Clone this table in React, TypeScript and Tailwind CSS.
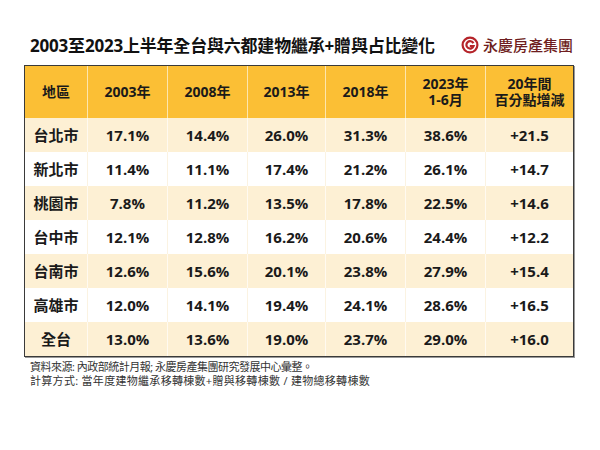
const font = { fontFamily: '"Open Sans", "Noto Sans CJK TC", sans-serif' };

const rows = [
  ["台北市", "17.1%", "14.4%", "26.0%", "31.3%", "38.6%", "+21.5"],
  ["新北市", "11.4%", "11.1%", "17.4%", "21.2%", "26.1%", "+14.7"],
  ["桃園市", "7.8%", "11.2%", "13.5%", "17.8%", "22.5%", "+14.6"],
  ["台中市", "12.1%", "12.8%", "16.2%", "20.6%", "24.4%", "+12.2"],
  ["台南市", "12.6%", "15.6%", "20.1%", "23.8%", "27.9%", "+15.4"],
  ["高雄市", "12.0%", "14.1%", "19.4%", "24.1%", "28.6%", "+16.5"],
  ["全台", "13.0%", "13.6%", "19.0%", "23.7%", "29.0%", "+16.0"],
];

const cols = "grid-cols-[62px_80px_80px_78px_80px_80px_88px]";

function Logo() {
  return (
    <div className="flex items-center gap-[4px]">
      <svg width="18" height="18" viewBox="0 0 18 18">
        <circle cx="9" cy="9" r="7.4" fill="none" stroke="#b5242a" strokeWidth="2.2" />
        <path d="M12.4 7.2 A3.7 3.7 0 1 0 12.6 10 L8.8 10" fill="none" stroke="#b5242a" strokeWidth="2.2" />
      </svg>
      <span className="text-[15px] font-medium text-[#6e1d20]" style={{ fontFamily: '"Noto Sans CJK TC", sans-serif' }}>
        永慶房產集團
      </span>
    </div>
  );
}

export default function App() {
  return (
    <div className="w-[600px] h-[450px] bg-white" style={font}>
      <div className="flex items-center justify-between pl-[30px] pr-[27px] pt-[33px] h-[65px] pb-[8px]">
        <h1 className="text-[17px] font-bold text-[#111] leading-none tracking-[-0.2px]">
          2003至2023上半年全台與六都建物繼承+贈與占比變化
        </h1>
        <Logo />
      </div>
      <div className="ml-[24px] w-[550px] border border-[#3a3a3a] shadow-[1px_1px_0_#999]">
        <div className={`grid ${cols} h-[52px] bg-[#fbbf35] text-[14px] font-bold text-[#1a1a1a] leading-[16px]`}>
          {["地區", "2003年", "2008年", "2013年", "2018年", "2023年\n1-6月", "20年間\n百分點增減"].map((h, i) => (
            <div key={i} className={`flex items-center justify-center text-center whitespace-pre ${i > 0 ? "border-l border-[#fde6ad]" : ""}`}>
              {h}
            </div>
          ))}
        </div>
        {rows.map((r, ri) => (
          <div key={ri} className={`grid ${cols} h-[34px] text-[15px] font-bold text-[#1a1a1a] ${ri % 2 === 0 ? "bg-[#fdf0d4]" : "bg-white"}`}>
            {r.map((c, i) => (
              <div key={i} className={`flex items-center justify-center ${i > 0 ? (ri % 2 === 0 ? "border-l border-[#fffaf0]" : "border-l border-[#fbf3e2]") : ""}`}>
                {c}
              </div>
            ))}
          </div>
        ))}
      </div>
      <div className="pl-[30px] pt-[3px] text-[11px] leading-[14px] text-[#333]">
        <div className="tracking-[-0.5px]">資料來源: 內政部統計月報; 永慶房產集團研究發展中心彙整。</div>
        <div className="tracking-[0.3px]">計算方式: 當年度建物繼承移轉棟數+贈與移轉棟數 / 建物總移轉棟數</div>
      </div>
    </div>
  );
}
